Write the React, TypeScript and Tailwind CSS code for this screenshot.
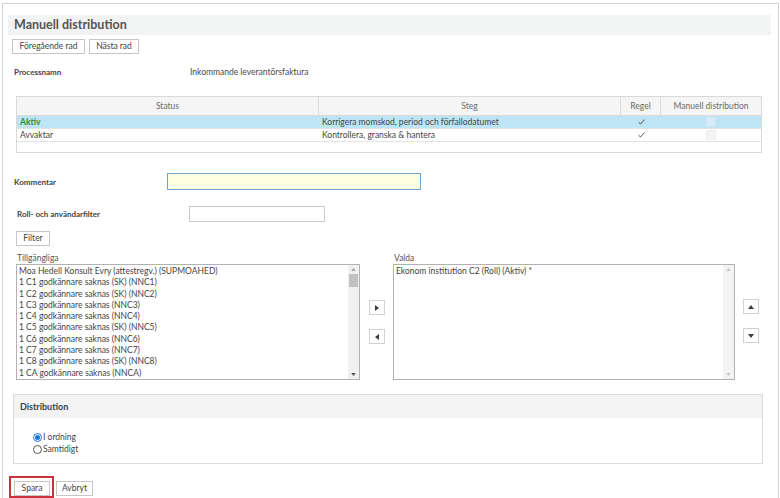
import React from 'react';

const tillgangliga = [
  'Moa Hedell Konsult Evry (attestregv.) (SUPMOAHED)',
  '1 C1 godkännare saknas (SK) (NNC1)',
  '1 C2 godkännare saknas (SK) (NNC2)',
  '1 C3 godkännare saknas (NNC3)',
  '1 C4 godkännare saknas (NNC4)',
  '1 C5 godkännare saknas (SK) (NNC5)',
  '1 C6 godkännare saknas (NNC6)',
  '1 C7 godkännare saknas (NNC7)',
  '1 C8 godkännare saknas (SK) (NNC8)',
  '1 CA godkännare saknas (NNCA)',
];

const Tri = ({ dir, color = '#444', size = 5 }: { dir: 'up' | 'down' | 'left' | 'right'; color?: string; size?: number }) => {
  const pts = {
    up: '0,4 3,0 6,4',
    down: '0,0 6,0 3,4',
    left: '4,0 4,6 0,3',
    right: '0,0 0,6 4,3',
  }[dir];
  const vb = dir === 'up' || dir === 'down' ? '0 0 6 4' : '0 0 4 6';
  return (
    <svg width={dir === 'up' || dir === 'down' ? size + 1 : size - 1} height={dir === 'up' || dir === 'down' ? size - 1 : size + 1} viewBox={vb}>
      <polygon points={pts} fill={color} />
    </svg>
  );
};

const Check = () => (
  <svg width="7" height="6" viewBox="0 0 7 6">
    <path d="M0.6 3.2 L2.5 5 L6.4 0.6" stroke="#555" strokeWidth="1" fill="none" />
  </svg>
);

const Btn = ({ children, className = '' }: { children: React.ReactNode; className?: string }) => (
  <div className={`h-[15px] border border-[#c6c6c6] bg-white flex items-center justify-center text-[8.5px] text-[#444] ${className}`}>
    {children}
  </div>
);

const MoveBtn = ({ dir }: { dir: 'up' | 'down' | 'left' | 'right' }) => (
  <div className="w-[16px] h-[15px] border border-[#d2d2d2] bg-white flex items-center justify-center">
    <Tri dir={dir} color="#3c3c3c" />
  </div>
);

export default function App() {
  return (
    <div className="w-[780px] h-[498px] bg-white overflow-hidden relative" style={{ fontFamily: 'Lato, "Liberation Sans", sans-serif' }}>
      <div className="h-[3px] w-full" />
      <div className="ml-[2px] w-[777px] h-[496px] border border-[#d4d4d4] relative">
        {/* header */}
        <div className="ml-[5px] mt-[11px] w-[763px] h-[20px] bg-[#f2f3f3] flex items-center pl-[6px]">
          <span className="text-[12.5px] font-bold text-[#555] leading-none">Manuell distribution</span>
        </div>

        <div className="flex gap-[4px] ml-[9px] mt-[4px]">
          <Btn className="w-[73px]">Föregående rad</Btn>
          <Btn className="w-[50px]">Nästa rad</Btn>
        </div>

        <div className="flex items-center h-[12px] mt-[12px] text-[8.5px]">
          <span className="ml-[11px] w-[176px] font-bold text-[#444] text-[8px]">Processnamn</span>
          <span className="text-[#4a4a4a]">Inkommande leverantörsfaktura</span>
        </div>

        {/* table */}
        <div className="ml-[13px] mt-[18px] w-[746px] h-[57px] border border-[#dadada] text-[8.5px] text-[#444]">
          <div className="flex h-[19px] bg-[#f5f5f5] border-b border-[#dadada] text-[#6a6a6a]">
            <div className="w-[302px] border-r border-[#dcdcdc] flex items-center justify-center">Status</div>
            <div className="w-[302px] border-r border-[#dcdcdc] flex items-center justify-center">Steg</div>
            <div className="w-[40px] border-r border-[#dcdcdc] flex items-center justify-center">Regel</div>
            <div className="flex-1 flex items-center justify-center">Manuell distribution</div>
          </div>
          <div className="flex h-[13px] bg-[#bde5f5] items-center border-b border-[#e3e3e3]">
            <div className="w-[302px] pl-[3px] font-bold text-[#23903a]">Aktiv</div>
            <div className="w-[302px] pl-[3px]">Korrigera momskod, period och förfallodatumet</div>
            <div className="w-[40px] flex justify-center"><Check /></div>
            <div className="flex-1 flex justify-center"><div className="w-[10px] h-[10px] bg-[#d6edf7] border border-[#cfe5ee]" /></div>
          </div>
          <div className="flex h-[13px] items-center border-b border-[#e3e3e3]">
            <div className="w-[302px] pl-[3px]">Avvaktar</div>
            <div className="w-[302px] pl-[3px]">Kontrollera, granska &amp; hantera</div>
            <div className="w-[40px] flex justify-center"><Check /></div>
            <div className="flex-1 flex justify-center"><div className="w-[10px] h-[10px] bg-[#f4f4f4] border border-[#ececec]" /></div>
          </div>
        </div>

        {/* kommentar */}
        <div className="flex items-center mt-[20px] h-[17px]">
          <span className="ml-[11px] w-[153px] font-bold text-[8px] text-[#444]">Kommentar</span>
          <div className="w-[254px] h-[17px] bg-[#ffffe4] border border-[#6fa7c6]" />
        </div>

        <div className="flex items-center mt-[16px] h-[16px]">
          <span className="ml-[14px] w-[172px] font-bold text-[8px] text-[#444]">Roll- och användarfilter</span>
          <div className="w-[136px] h-[16px] bg-white border border-[#cccccc]" />
        </div>

        <div className="ml-[13px] mt-[9px]">
          <Btn className="w-[34px]">Filter</Btn>
        </div>

        {/* lists */}
        <div className="flex ml-[13px] mt-[7px] text-[8.5px] text-[#444]">
          <div className="w-[344px]">
            <div className="h-[11px] pl-[1px] text-[#555] leading-[11px]">Tillgängliga</div>
            <div className="h-[116px] border border-[#b2b2b2] flex">
              <div className="flex-1 pl-[2px] pt-[1px]">
                {tillgangliga.map((t) => (
                  <div key={t} className="h-[11.3px] leading-[11.3px] whitespace-nowrap">{t}</div>
                ))}
              </div>
              <div className="w-[11px] bg-[#f0f0f0] flex flex-col items-center">
                <div className="h-[9px] flex items-center"><Tri dir="up" color="#a3a3a3" size={4} /></div>
                <div className="w-[9px] h-[13px] bg-[#c1c1c1]" />
                <div className="flex-1" />
                <div className="h-[9px] flex items-center"><Tri dir="down" color="#505050" size={4} /></div>
              </div>
            </div>
          </div>

          <div className="w-[33px] pl-[9px] pt-[47px] flex flex-col gap-[14px]">
            <MoveBtn dir="right" />
            <MoveBtn dir="left" />
          </div>

          <div className="w-[342px]">
            <div className="h-[11px] pl-[1px] text-[#555] leading-[11px]">Valda</div>
            <div className="h-[116px] border border-[#b2b2b2] flex">
              <div className="flex-1 pl-[2px] pt-[1px]">
                <div className="h-[11.3px] leading-[11.3px]">Ekonom institution C2 (Roll) (Aktiv) *</div>
              </div>
              <div className="w-[11px] bg-[#f3f3f3] flex flex-col items-center">
                <div className="h-[9px] flex items-center"><Tri dir="up" color="#c4c4c4" size={4} /></div>
                <div className="flex-1" />
                <div className="h-[9px] flex items-center"><Tri dir="down" color="#c4c4c4" size={4} /></div>
              </div>
            </div>
          </div>

          <div className="pl-[8px] pt-[46px] flex flex-col gap-[14px]">
            <MoveBtn dir="up" />
            <MoveBtn dir="down" />
          </div>
        </div>

        {/* distribution */}
        <div className="ml-[10px] mt-[14px] w-[750px] h-[70px] border border-[#dcdcdc]">
          <div className="h-[23px] bg-[#f3f3f3] flex items-center pl-[6px]">
            <span className="font-bold text-[9px] text-[#3f3f3f]">Distribution</span>
          </div>
          <div className="pl-[19px] pt-[13px] text-[8.5px] text-[#444]">
            <div className="flex items-center h-[12px] gap-[1px]">
              <div className="w-[9px] h-[9px] rounded-full border border-[#1a73e8] bg-white flex items-center justify-center">
                <div className="w-[5px] h-[5px] rounded-full bg-[#1a73e8]" />
              </div>
              <span>I ordning</span>
            </div>
            <div className="flex items-center h-[12px] gap-[1px]">
              <div className="w-[9px] h-[9px] rounded-full border border-[#555] bg-white" />
              <span>Samtidigt</span>
            </div>
          </div>
        </div>

        {/* bottom buttons */}
        <div className="flex gap-[6px] ml-[11px] mt-[17px]">
          <Btn className="w-[36px]">Spara</Btn>
          <Btn className="w-[37px]">Avbryt</Btn>
        </div>
        <div className="absolute left-[6px] top-[472px] w-[45px] h-[22px] border-2 border-[#c9323c]" />
      </div>
    </div>
  );
}
